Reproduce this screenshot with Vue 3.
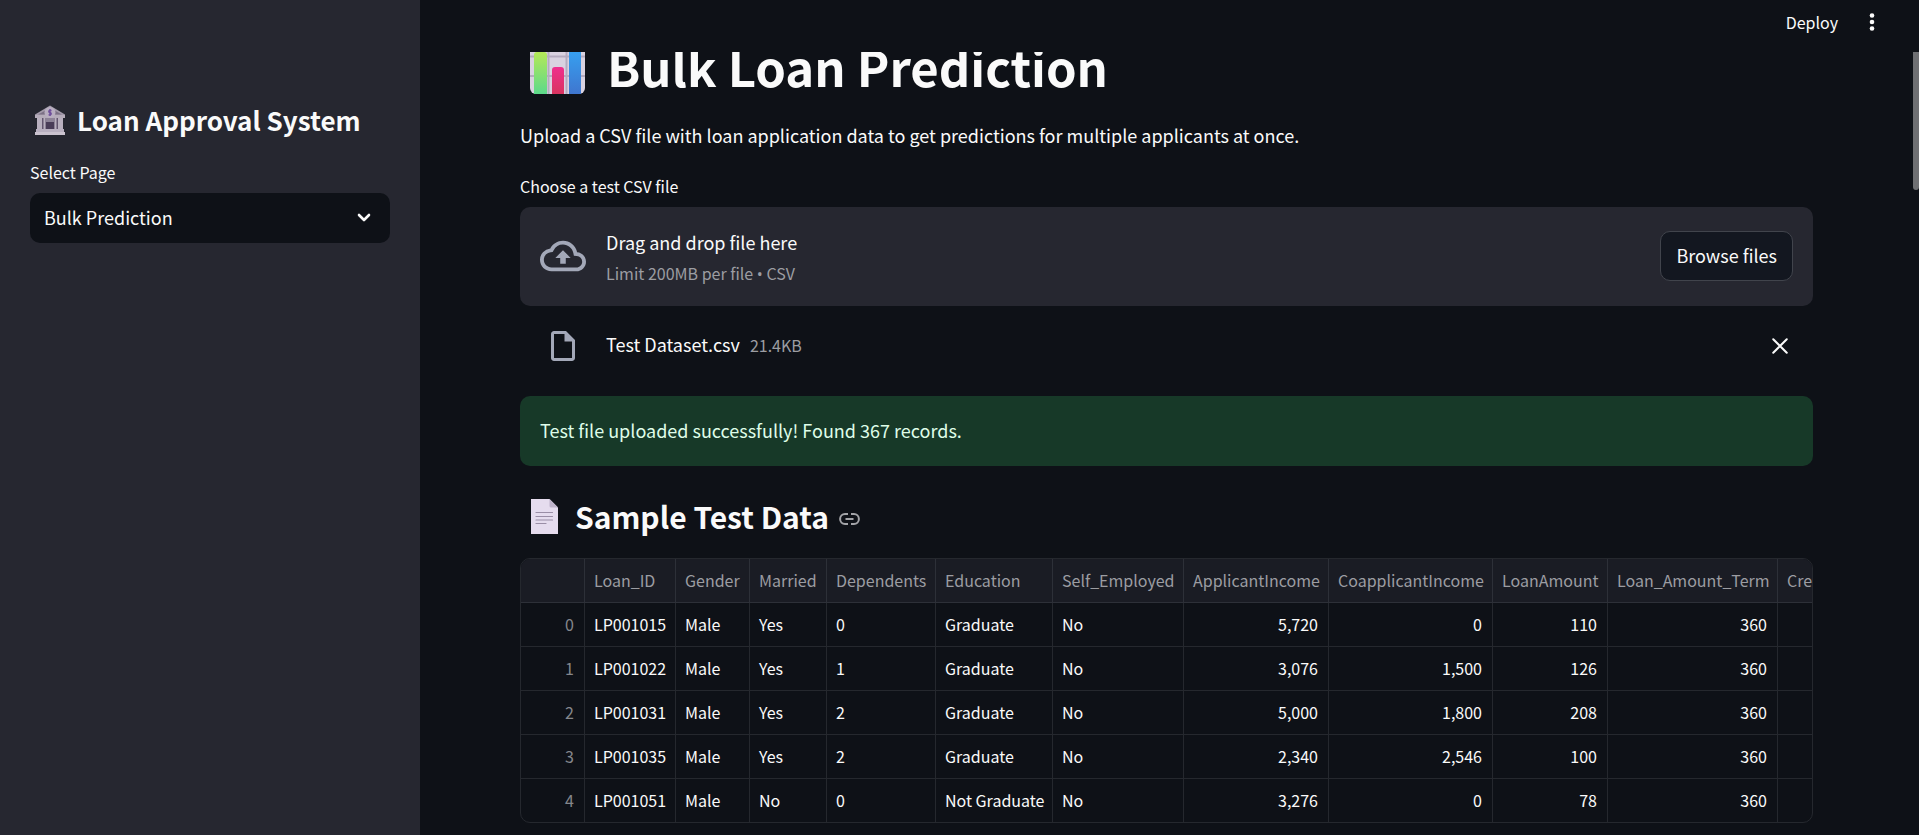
<script setup>
const columns = [
  { name: '', w: 64, num: true },
  { name: 'Loan_ID', w: 91 },
  { name: 'Gender', w: 74 },
  { name: 'Married', w: 77 },
  { name: 'Dependents', w: 109 },
  { name: 'Education', w: 117 },
  { name: 'Self_Employed', w: 131 },
  { name: 'ApplicantIncome', w: 145, num: true },
  { name: 'CoapplicantIncome', w: 164, num: true },
  { name: 'LoanAmount', w: 115, num: true },
  { name: 'Loan_Amount_Term', w: 170, num: true },
  { name: 'Credit_History', w: 140, num: true },
]
const rows = [
  ['0', 'LP001015', 'Male', 'Yes', '0', 'Graduate', 'No', '5,720', '0', '110', '360', ''],
  ['1', 'LP001022', 'Male', 'Yes', '1', 'Graduate', 'No', '3,076', '1,500', '126', '360', ''],
  ['2', 'LP001031', 'Male', 'Yes', '2', 'Graduate', 'No', '5,000', '1,800', '208', '360', ''],
  ['3', 'LP001035', 'Male', 'Yes', '2', 'Graduate', 'No', '2,340', '2,546', '100', '360', ''],
  ['4', 'LP001051', 'Male', 'No', '0', 'Not Graduate', 'No', '3,276', '0', '78', '360', ''],
]
</script>

<template>
  <div class="app">
    <aside class="sidebar">
      <h2 class="side-title">
        <svg class="bank" viewBox="0 0 30 30" aria-hidden="true">
          <path d="M0 9.500 15 0.500 30 9.500V12H0Z" fill="#a49bab" />
          <path d="M3 9.500 15 3 27 9.500Z" fill="#7c7186" />
          <rect x="2" y="12" width="26" height="14" fill="#63566f" />
          <path d="M2 12h5v13H2zM8.500 12h2v13h-2zM19.500 12h2v13h-2zM23 12h5v13h-5z" fill="#b9b0bf" />
          <path d="M11 17h8v8h-8z" fill="#4a3d58" />
          <path d="M11 13h8v4h-8z" fill="#8d8397" />
          <rect x="0" y="10" width="30" height="3" fill="#b5acba" />
          <rect x="1" y="24" width="28" height="3" fill="#b9b0c0" />
          <rect x="0" y="27" width="30" height="3" fill="#cbc3cf" />
          <circle cx="15" cy="7.500" r="5.500" fill="#b8aec0" />
          <path d="M16.500 5.500h-2a1.200 1.200 0 0 0 0 2.200h1a1.200 1.200 0 0 1 0 2.200h-2M15 4v7" fill="none" stroke="#6f4f9b" stroke-width="1.400" />
        </svg>
        <span>Loan Approval System</span>
      </h2>
      <label class="label" for="page">Select Page</label>
      <div class="select-wrap">
        <select id="page"><option>Bulk Prediction</option></select>
        <svg class="chev" viewBox="0 0 14 10" aria-hidden="true"><path d="M2 2l5 5 5-5" fill="none" stroke="#fafafa" stroke-width="2.600" stroke-linecap="round" stroke-linejoin="round" /></svg>
      </div>
    </aside>

    <main class="main">
      <header class="bar">
        <button class="plain deploy">Deploy</button>
        <button class="plain dots" aria-label="Main menu">
          <svg viewBox="0 0 6 18"><circle cx="3" cy="2.500" r="2.300" /><circle cx="3" cy="9" r="2.300" /><circle cx="3" cy="15.500" r="2.300" /></svg>
        </button>
      </header>
      <div class="scroll">
        <div class="content">
          <h1>
            <svg class="chart" viewBox="0 0 55 55" aria-hidden="true">
              <defs>
                <linearGradient id="g1" x1="0" y1="0" x2="0" y2="1"><stop offset="0" stop-color="#b5e857" /><stop offset="1" stop-color="#5cd98b" /></linearGradient>
                <linearGradient id="g2" x1="0" y1="0" x2="0" y2="1"><stop offset="0" stop-color="#ef2f8e" /><stop offset="1" stop-color="#d8345f" /></linearGradient>
                <linearGradient id="g3" x1="0" y1="0" x2="0" y2="1"><stop offset="0" stop-color="#35a8f6" /><stop offset="1" stop-color="#3f76cf" /></linearGradient>
              </defs>
              <rect width="55" height="55" rx="6" fill="#d9d2e0" />
              <path d="M0 17.500h55M0 37h55M18.500 0v55M36.500 0v55" stroke="#b5abbf" stroke-width="2" />
              <path d="M4 55V16a3 3 0 0 1 3-3h7a3 3 0 0 1 3 3v39z" fill="url(#g1)" />
              <path d="M22 55V31a3 3 0 0 1 3-3h6a3 3 0 0 1 3 3v24z" fill="url(#g2)" />
              <path d="M39 55V7a3 3 0 0 1 3-3h6a3 3 0 0 1 3 3v48z" fill="url(#g3)" />
            </svg>
            <span>Bulk Loan Prediction</span>
          </h1>
          <p class="intro">Upload a CSV file with loan application data to get predictions for multiple applicants at once.</p>
          <p class="label up-label">Choose a test CSV file</p>
          <section class="drop">
            <svg class="cloud" viewBox="0 0 24 24" aria-hidden="true"><path d="M19.350 10.040A7.490 7.490 0 0 0 12 4C9.110 4 6.600 5.640 5.350 8.040A5.994 5.994 0 0 0 0 14c0 3.310 2.690 6 6 6h13c2.760 0 5-2.240 5-5 0-2.640-2.050-4.780-4.650-4.960zM19 18H6c-2.210 0-4-1.790-4-4 0-2.050 1.530-3.760 3.560-3.970l1.070-.110.500-.950A5.469 5.469 0 0 1 12 6c2.620 0 4.880 1.860 5.390 4.430l.300 1.500 1.530.110A2.980 2.980 0 0 1 22 15c0 1.650-1.350 3-3 3zM8 13h2.550v3h2.900v-3H16l-4-4z" /></svg>
            <div class="drop-text">
              <div>Drag and drop file here</div>
              <div class="muted">Limit 200MB per file <span class="bullet">•</span> CSV</div>
            </div>
            <button class="browse">Browse files</button>
          </section>
          <div class="file">
            <svg class="doc" viewBox="4 2 16 20" aria-hidden="true"><path d="M6 2c-1.100 0-1.990.900-1.990 2L4 20c0 1.100.890 2 1.990 2H18c1.100 0 2-.900 2-2V8l-6-6H6zm0 18V4h7v5h5v11H6z" /></svg>
            <div class="file-text">Test Dataset.csv<span class="muted size">21.4KB</span></div>
            <button class="plain close" aria-label="Remove file"><svg viewBox="0 0 16 16"><path d="M2 2l12 12M14 2L2 14" fill="none" stroke="#fafafa" stroke-width="1.800" stroke-linecap="round" /></svg></button>
          </div>
          <div class="alert" role="alert">Test file uploaded successfully! Found 367 records.</div>
          <h3>
            <svg class="page" viewBox="0 0 27 35" aria-hidden="true">
              <path d="M0 0h18.500L27 8.500V35H0z" fill="#e5dcee" />
              <path d="M18.500 0 27 8.500h-7a1.500 1.500 0 0 1-1.500-1.500z" fill="#bfb4cb" />
              <path d="M5 13.500h16.500M5 17.500h16.500M5 21h16.500M5 24.500h10" stroke="#9a8ea6" stroke-width="1.200" stroke-linecap="round" />
            </svg>
            <span>Sample Test Data</span>
            <a href="#sample-test-data" class="anchor" aria-label="Link to heading"><svg viewBox="0 0 21 12"><path d="M9 1.100H6a4.900 4.900 0 0 0 0 9.800h3M12 1.100h3a4.900 4.900 0 0 1 0 9.800h-3M6.500 6h8" fill="none" stroke="#a3a4a8" stroke-width="2" /></svg></a>
          </h3>
          <div class="frame">
            <table>
              <colgroup><col v-for="c in columns" :key="c.name" :style="{ width: c.w + 'px' }" /></colgroup>
              <thead><tr><th v-for="c in columns" :key="c.name" scope="col">{{ c.name }}</th></tr></thead>
              <tbody>
                <tr v-for="r in rows" :key="r[1]"><td v-for="(v, i) in r" :key="i" :class="{ num: columns[i].num }">{{ v }}</td></tr>
              </tbody>
            </table>
          </div>
        </div>
        <div class="thumb"></div>
      </div>
    </main>
  </div>
</template>

<style>
body { margin: 0; background: #0e1117; }
</style>
<style scoped>
* { box-sizing: border-box; }
.app { display: flex; height: 100vh; overflow: hidden; color: #fafafa; background: #0e1117; font: 18px/30px "Noto Sans CJK SC", "Noto Sans", sans-serif; }
h1, h2, h3, p { margin: 0; }
button, select { font: inherit; color: inherit; }
svg { display: block; flex: none; }
.plain { background: none; border: 0; padding: 0; }
.sidebar { flex: none; width: 420px; padding: 100px 30px 0; background: #262730; }
.side-title { display: flex; align-items: center; height: 40px; padding-left: 5px; gap: 12px; font-size: 26px; line-height: 40px; font-weight: 600; white-space: nowrap; }
.bank { width: 30px; height: 30px; }
.label { display: block; font-size: 16px; line-height: 24px; }
.sidebar .label { margin: 20px 0 9px; }
.select-wrap { position: relative; }
select { width: 100%; height: 50px; padding: 0 14px 2px; border: 0; border-radius: 10px; background: #0e1117; appearance: none; }
.chev { position: absolute; right: 19px; top: 20px; width: 14px; height: 10px; }
.main { flex: 1; min-width: 0; display: flex; flex-direction: column; }
.bar { flex: none; height: 52px; padding: 0 44px 8px 0; display: flex; justify-content: flex-end; align-items: center; gap: 31px; }
.deploy { font-size: 16px; line-height: 24px; }
.dots svg { width: 6px; height: 18px; fill: #fafafa; }
.scroll { position: relative; flex: 1; min-height: 0; overflow: hidden; }
.content { padding: 0 106px 0 100px; }
h1 { display: flex; align-items: center; gap: 22px; height: 66px; margin-top: -19px; padding-left: 10px; font-size: 49px; line-height: 64px; font-weight: 700; }
.chart { width: 55px; height: 55px; }
.intro { margin-top: 21px; }
.up-label { margin: 24px 0 9px; }
.drop { display: flex; align-items: center; height: 99px; padding: 0 20px 2px; border-radius: 10px; background: #262730; }
.cloud { width: 46px; height: 46px; fill: #a3a8b8; margin-right: 20px; }
.drop-text { flex: 1; padding-top: 6px; }
.muted { font-size: 16px; line-height: 32px; color: #9c9da2; }
.bullet { font-family: "Open Sans", sans-serif; }
.browse { height: 50px; padding: 0 15px 2px; border: 1px solid #41444c; border-radius: 10px; background: #131720; }
.file { display: flex; align-items: center; height: 40px; margin: 20px 0 30px; padding: 0 24px 0 31px; }
.doc { width: 24px; height: 30px; fill: #a3a8b8; margin-right: 31px; }
.file-text { flex: 1; line-height: 32px; padding-bottom: 4px; }
.size { margin-left: 10px; }
.close svg { width: 18px; height: 18px; }
.alert { padding: 19px 20px 21px; border-radius: 10px; background: #173928; color: #dffde9; }
h3 { display: flex; align-items: center; margin-top: 28px; padding-left: 11px; font-size: 30px; line-height: 44px; font-weight: 600; }
.page { width: 27px; height: 35px; margin-right: 17px; }
.anchor { margin-left: 10px; padding-top: 6px; }
.anchor svg { width: 21px; height: 12px; }
.frame { margin-top: 20px; border: 1px solid #25282e; border-radius: 10px; overflow: hidden; }
table { width: 1397px; table-layout: fixed; border-collapse: separate; border-spacing: 0; font-size: 16px; line-height: 24px; }
th, td { height: 44px; padding: 0 9px 2px; border-right: 1px solid #25282e; border-bottom: 1px solid #25282e; text-align: left; font-weight: 400; white-space: nowrap; }
th { background: #1a1c24; color: #9c9da2; border-color: #2d3038; }
tbody tr:last-child td { height: 43px; border-bottom: 0; }
td.num { text-align: right; padding-right: 10px; }
td:first-child { color: #85878c; }
.thumb { position: absolute; top: 0; right: 0; width: 6px; height: 138px; background: #6f7073; border-radius: 0 0 3px 3px; }
</style>
